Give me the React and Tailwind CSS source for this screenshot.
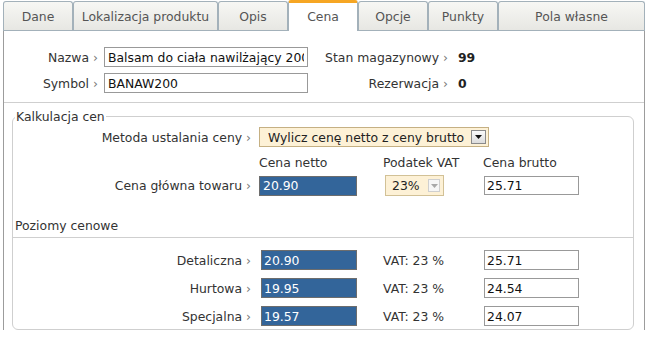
const tabs = [
  { label: 'Dane', cls: 'w-[70px]' },
  { label: 'Lokalizacja produktu', cls: 'w-[145px]' },
  { label: 'Opis', cls: 'w-[70px]' },
  { label: 'Cena', cls: 'w-[70px]', active: true },
  { label: 'Opcje', cls: 'w-[70px]' },
  { label: 'Punkty', cls: 'w-[70px]' },
  { label: 'Pola własne', cls: 'w-[147px]' },
]

const levels = [
  { name: 'Detaliczna', net: '20.90', gross: '25.71' },
  { name: 'Hurtowa', net: '19.95', gross: '24.54' },
  { name: 'Specjalna', net: '19.57', gross: '24.07' },
]

function Label({ children, className = '' }) {
  return (
    <div className={`shrink-0 text-right text-[#333] ${className}`}>
      {children} <span className="text-[#777]">›</span>
    </div>
  )
}

function Arrow({ dim }) {
  return (
    <svg width="7" height="4" viewBox="0 0 7 4">
      <path d="M0 0h7L3.5 4z" fill={dim ? '#a8a8a8' : '#111'} />
    </svg>
  )
}

export default function App() {
  return (
    <div className="h-[338px] w-[647px] overflow-hidden bg-white text-[12.4px] leading-[15px] text-[#333]" style={{ fontFamily: '"DejaVu Sans", Verdana, sans-serif' }}>
      <div className="ml-[3px] w-[642px]">
        {/* tabs */}
        <div className="flex h-[31px] items-end border-b border-[#a3b1ba]">
          {tabs.map((t) =>
            t.active ? (
              <div
                key={t.label}
                className={`${t.cls} relative -mb-px flex h-[31px] items-center justify-center rounded-t-[3px] border-x border-t-[3px] border-x-[#a3b1ba] border-t-[#f6a623] bg-white pb-[2px] text-[#555]`}
              >
                {t.label}
              </div>
            ) : (
              <div
                key={t.label}
                className={`${t.cls} flex h-[29px] items-center justify-center rounded-t-[3px] border-x border-t border-[#a3b1ba] bg-gradient-to-b from-[#f7f7f4] to-[#e7e7e3] text-[#555]`}
              >
                {t.label}
              </div>
            )
          )}
        </div>

        {/* panel */}
        <div className="border-x border-[#9c9c9c] pt-[16px]">
          <div className="flex h-[20px] items-center">
            <Label className="w-[94px]">Nazwa</Label>
            <input
              readOnly
              value="Balsam do ciała nawilżający 200 ml"
              className="ml-[6px] h-[20px] w-[204px] border border-[#999] px-[3px] text-[#111] outline-none"
            />
            <Label className="w-[140px]">Stan magazynowy</Label>
            <div className="ml-[10px] font-bold text-[#222]">99</div>
          </div>
          <div className="mt-[6px] flex h-[20px] items-center">
            <Label className="w-[94px]">Symbol</Label>
            <input
              readOnly
              value="BANAW200"
              className="ml-[6px] h-[20px] w-[204px] border border-[#999] px-[3px] text-[#111] outline-none"
            />
            <Label className="w-[140px]">Rezerwacja</Label>
            <div className="ml-[10px] font-bold text-[#222]">0</div>
          </div>

          <div className="mt-[9px] border-t border-[#cfcfcf]" />

          <fieldset className="mb-[8px] ml-[8px] mr-[10px] mt-[6px] rounded-[6px] border border-[#cfcfcf] px-0 pb-[3px] pt-0">
            <legend className="ml-[2px] px-[1px] leading-[15px] text-[#333]">Kalkulacja cen</legend>

            <div className="mt-[3px] flex h-[20px] items-center">
              <Label className="w-[238px]">Metoda ustalania ceny</Label>
              <div className="ml-[8px] flex h-[20px] w-[230px] items-center justify-between border border-[#c5b083] bg-[#fdf1d6] pl-[8px] pr-[2px] text-[#222]">
                <span>Wylicz cenę netto z ceny brutto</span>
                <span className="flex h-[14px] w-[15px] items-center justify-center border border-[#8a8a8a] bg-gradient-to-b from-[#fafafa] to-[#dcdcdc]">
                  <Arrow />
                </span>
              </div>
            </div>

            <div className="mt-[8px] flex h-[15px] items-center pl-[246px] text-[#333]">
              <div className="w-[124px]">Cena netto</div>
              <div className="w-[100px]">Podatek VAT</div>
              <div>Cena brutto</div>
            </div>

            <div className="mt-[5px] flex h-[21px] items-center">
              <Label className="w-[238px]">Cena główna towaru</Label>
              <input
                readOnly
                value="20.90"
                className="ml-[8px] h-[20px] w-[98px] border border-[#6d6d6d] bg-[#33659a] px-[3px] text-white outline-none"
              />
              <div className="ml-[28px] flex h-[21px] w-[59px] items-center justify-between border border-[#d2c196] bg-[#fdf1d6] pl-[6px] pr-[3px] text-[#222]">
                <span>23%</span>
                <span className="flex h-[13px] w-[12px] items-center justify-center border border-[#cfcfcf] bg-[#f6f6f6]">
                  <Arrow dim />
                </span>
              </div>
              <input
                readOnly
                value="25.71"
                className="ml-[40px] h-[19px] w-[95px] border border-[#999] px-[2px] text-[#111] outline-none"
              />
            </div>

            <div className="mt-[22px] border-b border-[#cfcfcf] pb-[4px] pl-[2px] text-[#333]">Poziomy cenowe</div>

            {levels.map((l, i) => (
              <div key={l.name} className={`${i === 0 ? 'mt-[12px]' : 'mt-[8px]'} flex h-[20px] items-center`}>
                <Label className="w-[238px]">{l.name}</Label>
                <input
                  readOnly
                  value={l.net}
                  className="ml-[10px] h-[20px] w-[96px] border border-[#6d6d6d] bg-[#33659a] px-[2px] text-white outline-none"
                />
                <div className="ml-[26px] w-[101px] text-[#333]">VAT: 23 %</div>
                <input
                  readOnly
                  value={l.gross}
                  className="h-[20px] w-[95px] border border-[#999] px-[2px] text-[#111] outline-none"
                />
              </div>
            ))}
          </fieldset>
        </div>
      </div>
    </div>
  )
}
